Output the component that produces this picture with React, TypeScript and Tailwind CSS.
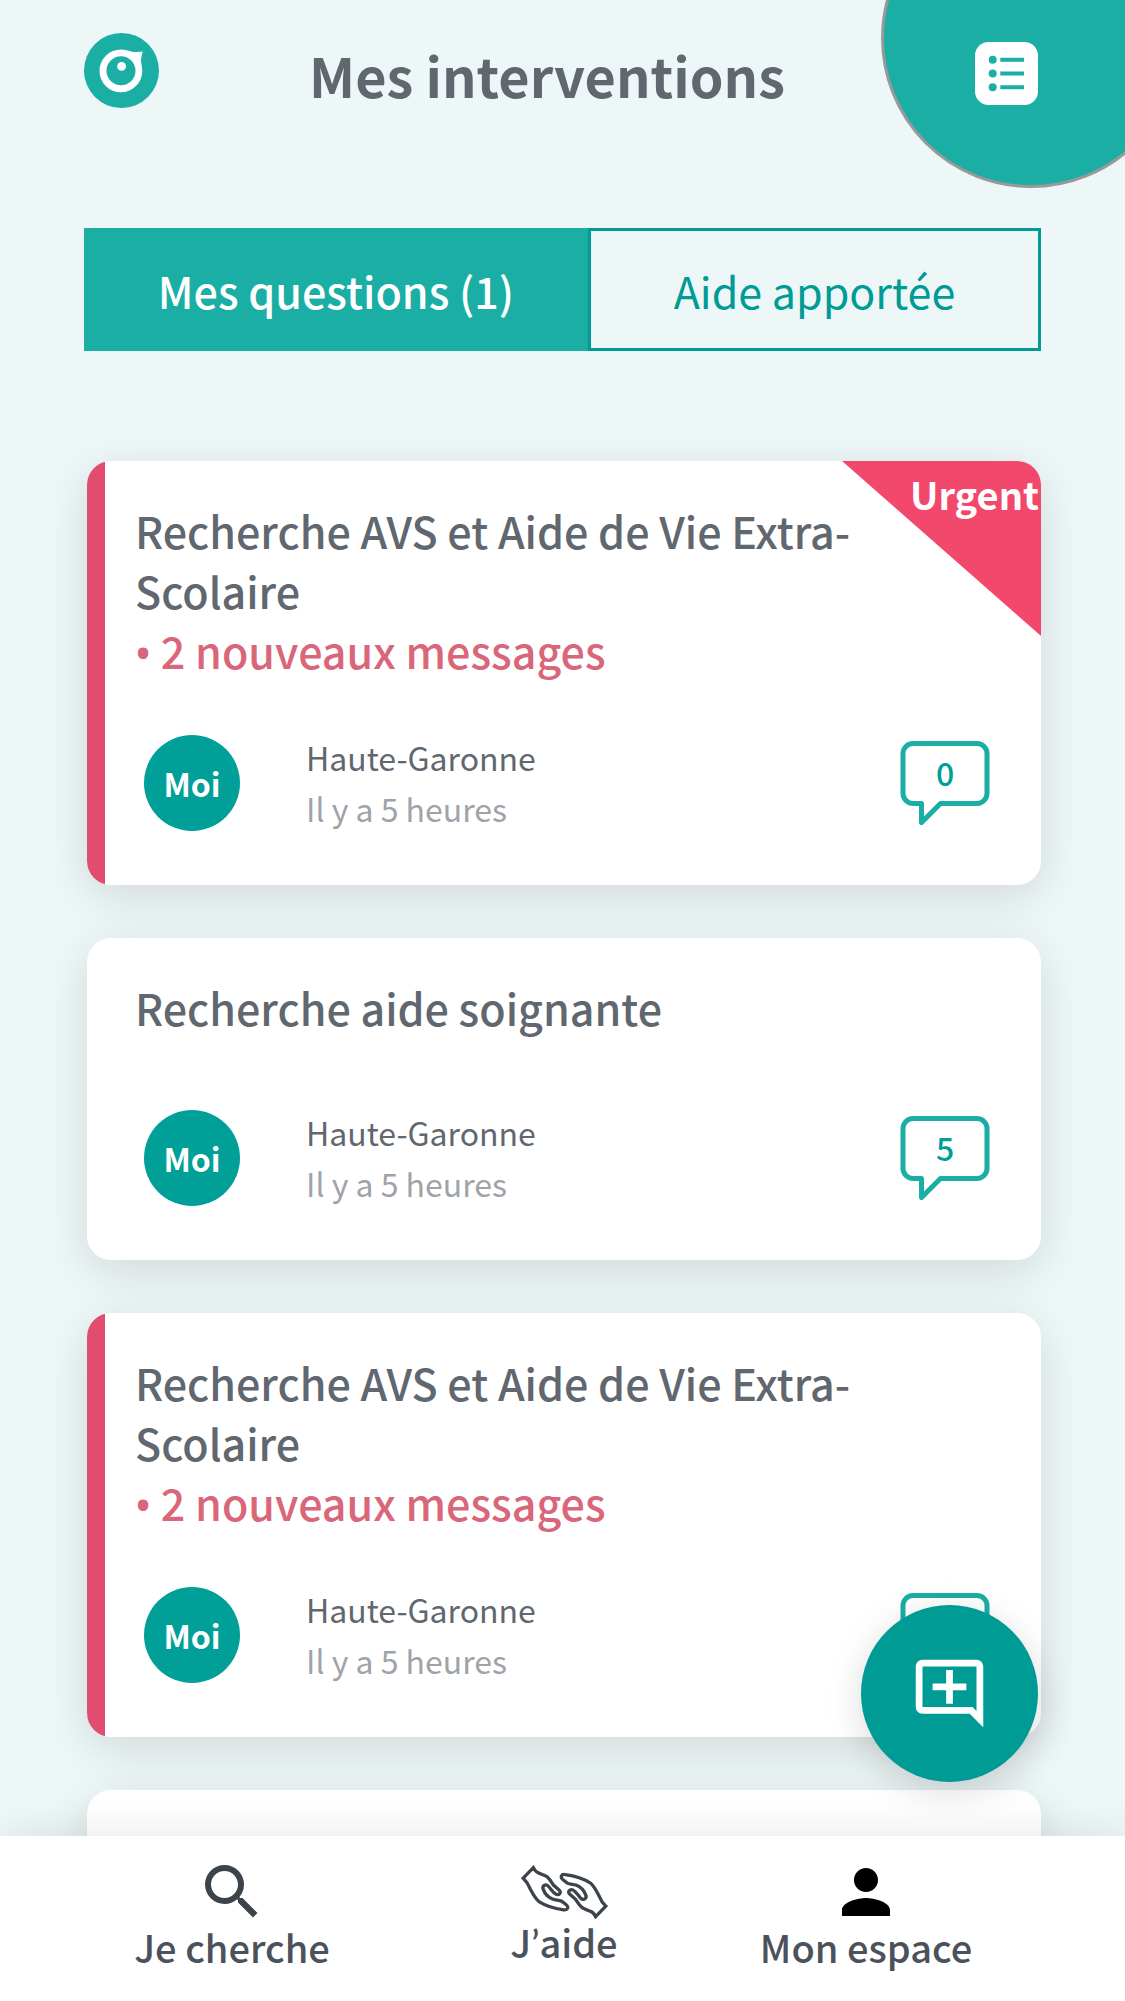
import { MdOutlineAddComment, MdPerson, MdSearch } from "react-icons/md";

interface Question {
  id: number;
  title: string;
  newMessages: number;
  urgent: boolean;
  place: string;
  date: string;
  answers: number;
}

const questions: Question[] = [
  { id: 1, title: "Recherche AVS et Aide de Vie Extra-Scolaire", newMessages: 2, urgent: true, place: "Haute-Garonne", date: "Il y a 5 heures", answers: 0 },
  { id: 2, title: "Recherche aide soignante", newMessages: 0, urgent: false, place: "Haute-Garonne", date: "Il y a 5 heures", answers: 5 },
  { id: 3, title: "Recherche AVS et Aide de Vie Extra-Scolaire", newMessages: 2, urgent: false, place: "Haute-Garonne", date: "Il y a 5 heures", answers: 0 },
  { id: 4, title: "Recherche aide soignante", newMessages: 0, urgent: false, place: "Haute-Garonne", date: "Il y a 5 heures", answers: 5 },
];

function Logo() {
  return (
    <svg viewBox="0 0 75 75" className="size-[75px] shrink-0" aria-hidden="true">
      <circle cx="37.5" cy="37.5" r="37.5" fill="#1aaea5" />
      <path d="M37 16.5c4 0 7 1.2 10 2 4 .8 8 .7 11.7.1-.7 3.4-1.7 6.4-1.7 9.4.3 3.2 1.3 6 1.3 10A21.4 21.4 0 1 1 37 16.5z" fill="#fff" />
      <circle cx="37" cy="37.8" r="14.5" fill="#1aaea5" />
      <circle cx="37.6" cy="33.3" r="4.4" fill="#fff" />
    </svg>
  );
}

function ListIcon() {
  return (
    <svg viewBox="0 0 63 63" className="size-[63px]" aria-hidden="true">
      <rect width="63" height="63" rx="13.5" fill="#fff" />
      <g fill="#1aaea5">
        <circle cx="17.7" cy="17.8" r="4" />
        <circle cx="17.7" cy="31.5" r="4" />
        <circle cx="17.7" cy="45.2" r="4" />
        <path d="M25.3 15.8H49v4H25.3zM25.3 29.5H49v4H25.3zM25.3 43.2H49v4H25.3z" />
      </g>
    </svg>
  );
}

function HandsIcon() {
  const hand =
    "M95 86L126 54C130 62 134 68 141 70L158 77C166 79 171 84 176 91L187 107L204 122C212 129 205 139 195 135C186 131 181 121 173 112C165 101 151 109 156 120C161 134 173 145 186 150C194 153 204 152 212 156L225 166C235 174 230 184 218 182C190 178 160 168 143 157C131 148 124 133 116 118C112 108 107 97 95 86Z";
  return (
    <svg
      viewBox="87 46 267 164"
      className="h-[54px] w-[89px]"
      fill="none"
      stroke="#3c434a"
      strokeWidth="10"
      aria-hidden="true"
    >
      <path d={hand} />
      <path d={hand} transform="rotate(180 220.5 128.5)" />
    </svg>
  );
}

function AnswerCount({ count }: { count: number }) {
  return (
    <div className="relative h-[84px] w-[90px]">
      <svg viewBox="0 0 90 84" className="size-full" fill="none" stroke="#1aaea5" strokeWidth="5" strokeLinejoin="round" aria-hidden="true">
        <path d="M13 2.5H77A10 10 0 0 1 87 12.5V52.5A10 10 0 0 1 77 62.5H40.5L21.5 81.5V62.5H13A10 10 0 0 1 3 52.5V12.5A10 10 0 0 1 13 2.5Z" />
      </svg>
      <span className="absolute inset-x-0 top-0 text-center text-[32px] leading-[63px] font-medium text-[#00a099]">{count}</span>
    </div>
  );
}

function QuestionCard({ question }: { question: Question }) {
  return (
    <li className="relative rounded-3xl bg-white shadow-[0_12px_48px_rgba(0,0,0,0.12)]">
      <div className="relative flex overflow-hidden rounded-3xl">
        <div className={question.newMessages > 0 ? "w-[18px] bg-[#e14d6e]" : "w-[18px]"} />
        <div className="min-w-0 flex-1 pt-[39px] pr-[51px] pb-[51px] pl-[30px]">
          <div className="min-h-[81px] pr-[120px] text-[43px] leading-[60px] font-medium text-[#60676f]">
            <h2>{question.title}</h2>
            {question.newMessages > 0 && (
              <p className="text-[#d96679]">
                <span className="font-['Noto_Sans']">•</span> {question.newMessages} nouveaux messages
              </p>
            )}
          </div>
          <div className="mt-[49px] flex items-center pl-[9px] text-[32px]">
            <div className="flex size-24 items-center justify-center rounded-full bg-[#00a099] font-bold text-white">
              Moi
            </div>
            <div className="ml-[66px] flex-1 leading-[51px]">
              <p className="text-[#60676f]">{question.place}</p>
              <p className="text-[#9fa3a9]">{question.date}</p>
            </div>
            <AnswerCount count={question.answers} />
          </div>
        </div>
        {question.urgent && (
          <div className="absolute top-0 right-0 h-[175px] w-[199px] bg-[#f2486b] pt-1.5 pr-0.5 text-right text-[38px] leading-[54px] font-bold text-white [clip-path:polygon(0_0,100%_0,100%_100%)]">
            Urgent
          </div>
        )}
      </div>
    </li>
  );
}

export default function App() {
  return (
    <div className="flex h-screen flex-col overflow-hidden bg-[#eef7f8] font-['Noto_Sans_CJK_SC',sans-serif]">
      <main className="relative min-h-0 flex-1 overflow-x-hidden overflow-y-auto [scrollbar-width:none]">
        <div className="absolute -top-28 -right-14 size-[300px] rounded-full border-3 border-[#999] bg-[#1aaea5]" />
        <header className="relative flex items-start px-[84px] pt-[33px]">
          <Logo />
          <h1 className="flex-1 pr-10 text-center text-[54px] leading-[84px] font-bold text-[#60676f]">Mes interventions</h1>
          <button type="button" aria-label="Menu" className="mt-[9px] mr-[3px]">
            <ListIcon />
          </button>
        </header>

        <div role="tablist" className="mx-[84px] mt-[111px] grid h-[123px] grid-cols-[504fr_453fr] text-[43px]">
          <button type="button" role="tab" aria-selected="true" className="bg-[#1aaea5] pt-0.5 font-medium text-white">
            Mes questions (1)
          </button>
          <button type="button" role="tab" aria-selected="false" className="border-3 border-[#009b95] pt-0.5 text-[#009b95]">
            Aide apportée
          </button>
        </div>

        <ul className="mt-[110px] mr-[84px] mb-[53px] ml-[87px] flex flex-col gap-[53px]">
          {questions.map((question) => (
            <QuestionCard key={question.id} question={question} />
          ))}
        </ul>
      </main>

      <nav className="relative grid h-[165px] grid-cols-[464fr_200fr_404fr] bg-white pr-[57px] text-[38px] leading-[54px] font-medium text-[#4b525b] shadow-[0_-6px_36px_rgba(0,0,0,0.08)]">
        <button
          type="button"
          aria-label="Poser une question"
          className="absolute right-[87px] bottom-[219px] flex size-[177px] items-center justify-center rounded-full bg-[#009b95] text-white shadow-[0_9px_36px_rgba(0,0,0,0.15)]"
        >
          <MdOutlineAddComment className="size-[81px]" />
        </button>
        <a href="#cherche" className="flex flex-col items-center pt-5">
          <MdSearch className="size-[72px] text-[#3c434a]" />
          <span className="-mt-2">Je cherche</span>
        </a>
        <a href="#aide" className="flex flex-col items-center pt-[29px]">
          <HandsIcon />
          <span className="-mt-1">
            J<span className="font-[Lato]">’</span>aide
          </span>
        </a>
        <a href="#espace" className="flex flex-col items-center pt-5">
          <MdPerson className="size-[72px] text-black" />
          <span className="-mt-2">Mon espace</span>
        </a>
      </nav>
    </div>
  );
}
